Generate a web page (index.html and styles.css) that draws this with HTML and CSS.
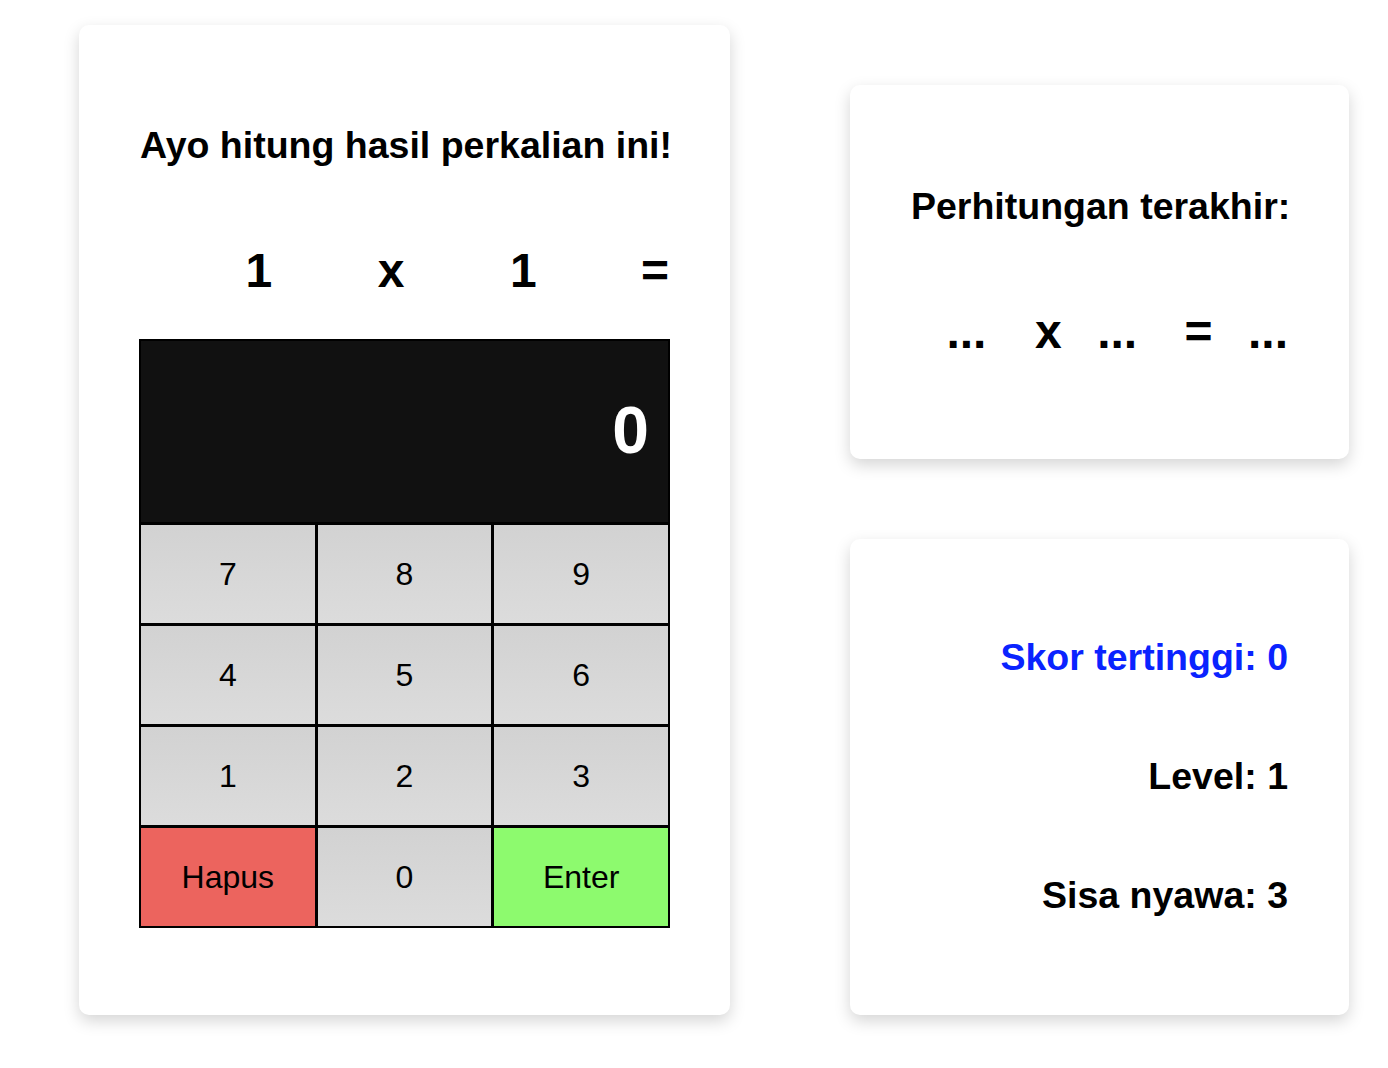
FILE: index.html
```html
<!DOCTYPE html>
<html lang="id">
<head>
<meta charset="utf-8">
<title>Perkalian</title>
<link rel="stylesheet" href="styles.css">
</head>
<body>
<main class="page">
  <section class="card game">
    <h2 class="title">Ayo hitung hasil perkalian ini!</h2>
    <div class="equation four">
      <span>1</span><span>x</span><span>1</span><span>=</span>
    </div>
    <div class="calculator">
      <div class="display">0</div>
      <div class="keys">
        <button class="key">7</button>
        <button class="key">8</button>
        <button class="key">9</button>
        <button class="key">4</button>
        <button class="key">5</button>
        <button class="key">6</button>
        <button class="key">1</button>
        <button class="key">2</button>
        <button class="key">3</button>
        <button class="key key-delete">Hapus</button>
        <button class="key">0</button>
        <button class="key key-enter">Enter</button>
      </div>
    </div>
  </section>
  <div class="side">
    <section class="card last">
      <h2 class="title">Perhitungan terakhir:</h2>
      <div class="equation five">
        <span>...</span><span>x</span><span>...</span><span>=</span><span>...</span>
      </div>
    </section>
    <section class="card stats">
      <p class="stat highscore">Skor tertinggi: 0</p>
      <p class="stat">Level: 1</p>
      <p class="stat">Sisa nyawa: 3</p>
    </section>
  </div>
</main>
</body>
</html>
```

FILE: styles.css
```css
* { box-sizing: border-box; }

html, body {
  margin: 0;
  padding: 0;
  background: #ffffff;
}

body {
  font-family: "Liberation Sans", Arial, Helvetica, sans-serif;
  color: #000;
  min-height: 1068px;
}

.page {
  display: flex;
  align-items: flex-end;
  gap: 120px;
  padding: 25px 0 53px 79px;
}

.card {
  background: #fff;
  border-radius: 10px;
  box-shadow: 0 6px 16px rgba(0, 0, 0, 0.17);
}

.title {
  margin: 0;
  font-size: 37.5px;
  font-weight: 700;
  line-height: 42px;
  white-space: nowrap;
}

.game {
  width: 651px;
  height: 990px;
  padding: 99px 61px 0 61px;
}

.equation {
  display: grid;
  font-size: 48px;
  font-weight: 700;
  line-height: 55px;
  text-align: right;
}

.equation.four {
  grid-template-columns: repeat(4, 1fr);
  margin-top: 77px;
}

.equation.five {
  grid-template-columns: repeat(5, 1fr);
  margin-top: 77px;
}

.calculator {
  margin-top: 41px;
  margin-left: -1px;
  margin-right: -1px;
  border: 2px solid #000;
  background: #000;
}

.display {
  height: 181px;
  background: #111;
  color: #fff;
  font-size: 66px;
  font-weight: 700;
  display: flex;
  align-items: center;
  justify-content: flex-end;
  padding-right: 19px;
  padding-bottom: 4px;
}

.keys {
  display: grid;
  grid-template-columns: repeat(3, 1fr);
  grid-auto-rows: 98px;
  gap: 3px;
  padding-top: 3px;
}

.key {
  border: none;
  margin: 0;
  padding: 0;
  font-family: "Liberation Sans", Arial, Helvetica, sans-serif;
  font-size: 32px;
  color: #000;
  background: linear-gradient(#d2d2d2, #dcdcdc);
}

.key-delete {
  background: #ec645e;
}

.key-enter {
  background: #8dfa6e;
}

.side {
  display: flex;
  flex-direction: column;
  gap: 80px;
  width: 499px;
}

.last {
  height: 374px;
  padding: 100px 61px 0 61px;
}

.last .title {
  text-align: right;
}

.stats {
  height: 476px;
  padding: 97px 61px 0 61px;
  display: flex;
  flex-direction: column;
  align-items: flex-end;
  gap: 77px;
}

.stat {
  margin: 0;
  font-size: 37.5px;
  font-weight: 700;
  line-height: 42px;
}

.highscore {
  color: #0a23ff;
}
```
